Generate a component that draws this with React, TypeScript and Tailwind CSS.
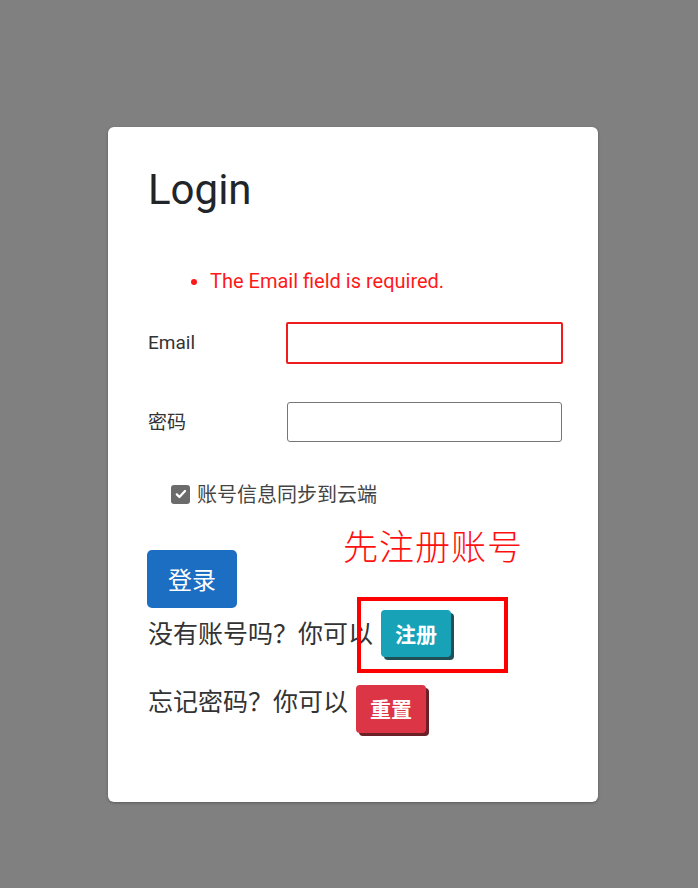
export default function App() {
  const latin = { fontFamily: 'Roboto, "Noto Sans CJK SC", sans-serif' };
  const cjk = { fontFamily: '"Noto Sans CJK SC", "Liberation Sans", sans-serif' };

  return (
    <div className="min-h-[888px] w-full bg-[#808080] pt-[127px] pl-[108px]">
      <div className="relative h-[675px] w-[490px] rounded-[6px] bg-white pl-[40px] pt-[38px] shadow-[0_1px_3px_rgba(0,0,0,0.3)]">
        <h1 className="text-[42px] leading-[50px] text-[#212529]" style={latin}>
          Login
        </h1>

        <ul className="mt-[53px] list-disc pl-[62px] text-[20px] leading-[27px] text-[#ff1a1a] marker:text-[#ff1a1a]" style={latin}>
          <li>The Email field is required.</li>
        </ul>

        <div className="mt-[27px] flex items-center">
          <label className="w-[138px] text-[19px] text-[#333]" style={latin}>
            Email
          </label>
          <input
            type="text"
            className="h-[42px] w-[277px] rounded-[2px] border-2 border-[#ee1c1c] bg-white outline-none"
          />
        </div>

        <div className="mt-[38px] flex items-center">
          <label className="mb-[2px] w-[139px] text-[19px] text-[#333]" style={cjk}>
            密码
          </label>
          <input
            type="password"
            className="h-[40px] w-[275px] rounded-[3px] border border-[#767676] bg-white outline-none"
          />
        </div>

        <div className="mt-[42px] ml-[23px] flex items-center gap-[7px]">
          <span className="flex h-[19px] w-[19px] items-center justify-center rounded-[3px] bg-[#6b6b6b]">
            <svg viewBox="0 0 16 16" className="h-[14px] w-[14px]" fill="none" stroke="white" strokeWidth="2.6" strokeLinecap="round" strokeLinejoin="round">
              <path d="M3.2 8.4l3 3 6.4-6.8" />
            </svg>
          </span>
          <span className="text-[20px] leading-[20px] text-[#444]" style={cjk}>
            账号信息同步到云端
          </span>
        </div>

        <button
          type="button"
          className="mt-[46px] -ml-[1px] flex h-[58px] w-[90px] items-center justify-center rounded-[5px] bg-[#1b6ec2] text-[24px] text-white"
          style={cjk}
        >
          登录
        </button>

        <div className="mt-[2px] flex items-center gap-[8px]">
          <span className="mb-[4px] text-[25px] leading-[32px] text-[#333]" style={cjk}>
            没有账号吗？你可以
          </span>
          <button
            type="button"
            className="flex h-[47px] w-[70px] items-center justify-center rounded-[4px] bg-[#17a2b8] text-[21px] font-semibold text-white shadow-[3px_3px_0_#1f4f57]"
            style={cjk}
          >
            注册
          </button>
        </div>

        <div className="mt-[27px] flex items-center gap-[8px]">
          <span className="mb-[18px] text-[25px] leading-[32px] text-[#333]" style={cjk}>
            忘记密码？你可以
          </span>
          <button
            type="button"
            className="flex h-[48px] w-[70px] items-center justify-center rounded-[4px] bg-[#dc3545] text-[21px] font-semibold text-white shadow-[3px_3px_0_#6b1f27]"
            style={cjk}
          >
            重置
          </button>
        </div>

        <div
          className="absolute left-[235px] top-[396px] text-[35px] font-light leading-[44px] tracking-[1px] text-[#ff1010]"
          style={cjk}
        >
          先注册账号
        </div>
        <div className="absolute left-[249px] top-[470px] h-[76px] w-[151px] border-[4px] border-[#ff0000]" />
      </div>
    </div>
  );
}
